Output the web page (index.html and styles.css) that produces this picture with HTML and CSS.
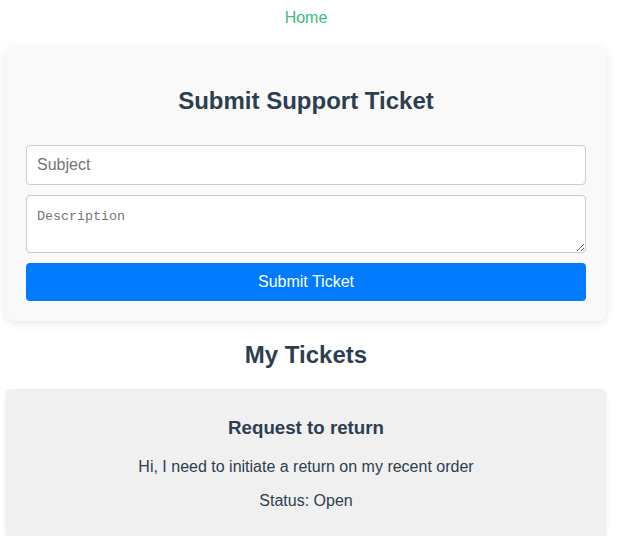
FILE: index.html
```html
<!DOCTYPE html>
<html lang="en">
<head>
<meta charset="utf-8">
<title>Support Tickets</title>
<link rel="stylesheet" href="styles.css">
</head>
<body>
<div class="app">
  <nav class="nav"><a href="#" class="nav-link">Home</a></nav>
  <section class="ticket-form-card">
    <h2 class="section-title">Submit Support Ticket</h2>
    <form class="ticket-form">
      <input class="field" type="text" placeholder="Subject">
      <textarea class="field field-area" placeholder="Description"></textarea>
      <button class="submit-btn" type="button">Submit Ticket</button>
    </form>
  </section>
  <h2 class="section-title list-title">My Tickets</h2>
  <div class="ticket">
    <h3 class="ticket-title">Request to return</h3>
    <p class="ticket-text">Hi, I need to initiate a return on my recent order</p>
    <p class="ticket-text">Status: Open</p>
  </div>
</div>
</body>
</html>
```

FILE: styles.css
```css
html, body {
  margin: 0;
  padding: 0;
  background: #ffffff;
}
body {
  font-family: "Liberation Sans", Arial, Helvetica, sans-serif;
  color: #2c3e50;
  -webkit-font-smoothing: antialiased;
}
.app {
  width: 600px;
  margin-left: 6px;
  padding-top: 9px;
  text-align: center;
}
.nav {
  margin-bottom: 20px;
  font-size: 16px;
  line-height: 18px;
}
.nav-link {
  color: #42b983;
  text-decoration: none;
}
.ticket-form-card {
  background: #f9f9f9;
  border-radius: 8px;
  padding: 20px;
  box-shadow: 0 2px 10px rgba(0, 0, 0, 0.1);
}
.section-title {
  font-size: 24px;
  font-weight: bold;
  margin: 20px 0;
}
.list-title {
  margin: 20px 0;
}
.ticket-form {
  display: flex;
  flex-direction: column;
  gap: 10px;
  padding-top: 10px;
}
.field {
  box-sizing: border-box;
  width: 100%;
  height: 40px;
  padding: 10px;
  border: 1px solid #cccccc;
  border-radius: 4px;
  font-family: "Liberation Sans", Arial, sans-serif;
  font-size: 16px;
  color: #2c3e50;
  background: #ffffff;
  margin: 0;
}
.field::placeholder {
  color: #757575;
}
.field-area {
  height: 58px;
  padding-top: 13px;
  font-family: "Liberation Mono", "Courier New", monospace;
  font-size: 13.33px;
  resize: vertical;
  display: block;
}
.submit-btn {
  height: 38px;
  padding: 0 10px;
  border: none;
  border-radius: 4px;
  background: #007bff;
  color: #ffffff;
  font-family: "Liberation Sans", Arial, sans-serif;
  font-size: 16px;
  cursor: pointer;
}
.ticket {
  background: #f0f0f0;
  border-radius: 5px;
  padding: 9px 10px 11px;
  box-shadow: 0 2px 4px rgba(0, 0, 0, 0.1);
}
.ticket-title {
  font-size: 18.72px;
  margin: 18.72px 0 19px;
}
.ticket-text {
  font-size: 16px;
  margin: 16px 0 15px;
}
```
